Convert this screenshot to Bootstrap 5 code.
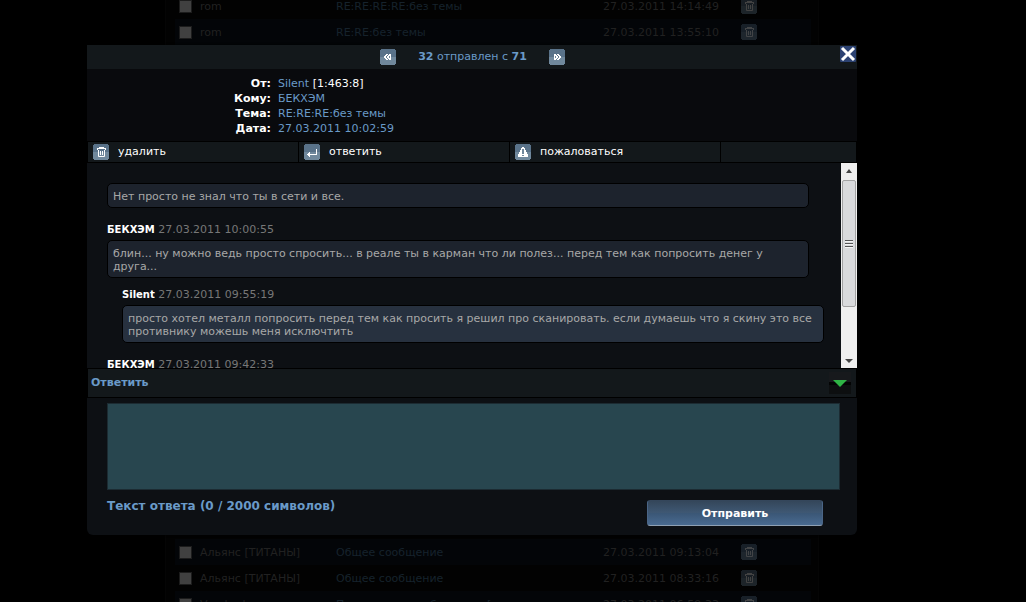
<!DOCTYPE html>
<html lang="ru" data-bs-theme="dark">
<head>
<meta charset="utf-8">
<meta name="viewport" content="width=device-width, initial-scale=1">
<title>Сообщения</title>
<link href="https://cdn.jsdelivr.net/npm/bootstrap@5.3.0/dist/css/bootstrap.min.css" rel="stylesheet">
<style>
  body { background: #000; color: #fff; font-family: Verdana, "DejaVu Sans", sans-serif; font-size: 11px; line-height: 13px; }
  a { color: #6a9ac8; text-decoration: none; }
  .stage { height: 100vh; }
  /* dimmed mailbox behind the dialog */
  .mailbox { margin: 0 207px 0 165px; padding: 0 7px 0 9px; background: #020202; border: 1px solid #050505; border-width: 0 1px; }
  .mail-table { width: 100%; table-layout: fixed; margin-top: -7px; color: #212121; }
  .mail-table tr { height: 26px; background: #020202; }
  .mail-table tr.alt { background: #030508; }
  .mail-table tr.gap-row { height: 494px; }
  .mail-table td { padding: 0; }
  .mail-table a { color: #16222c; }
  .mail-table .form-check-input { width: 13px; height: 13px; margin: 0 0 0 4px; border: 1px solid #1c1c1c; border-radius: 0; background: #404040; display: block; }
  .mail-table .dim { opacity: .25; }
  .icon-btn { width: 16px; height: 16px; padding: 0; border: 0; background: none; line-height: 0; display: block; }
  .icon-btn svg, .tool svg { width: 16px; height: 16px; display: block; }
  /* dialog */
  .letter { top: 45px; left: 87px; right: 169px; background: #0d1014; border-radius: 0 0 6px 6px; box-shadow: 0 0 3px #000; }
  .pager { height: 24px; background: #13181b; color: #6a9ac8; gap: 22px; padding-left: 1px; }
  .lift { padding-bottom: 2px; }
  .close-btn { top: 1px; right: 1px; }
  .facts { background: #090a0d; padding: 7px 0 5px; line-height: 15px; }
  .facts dt { width: 184px; text-align: right; }
  .facts dd { margin-left: 7px; }
  .tools { display: grid; grid-template-columns: 210fr 210fr 210fr 135fr; gap: 1px; background: #000; padding: 1px; height: 22px; }
  .tool { background: #13181b; color: #fff; border: 0; padding: 0 0 0 5px; gap: 9px; font-size: 11px; line-height: 13px; }
  .thread { height: 205px; }
  .posts { padding: 20px 32px 0 20px; }
  .post-head { margin: 15px 0 4px; color: #777; }
  .post-head b { color: #fff; font-size: 10px; }
  .bubble { border: 1px solid #000; border-radius: 5px; padding: 6px 5px 4px; background: #1d232d; color: #a8a8a8; }
  .own { margin: 10px -15px 0 15px; }
  .own .bubble { background: #27313f; }
  .scroller { width: 16px; background: #efefef; }
  .scroller svg { display: block; }
  .thumb { height: 127px; border: 1px solid #a2a2a2; border-radius: 2px; background: #d9dadc; margin: 0 1px; }
  .reply-head { height: 30px; background: #13181b; border: 1px solid #000; color: #6a9ac8; padding: 0 5px 0 3px; }
  .reply { padding: 5px 17px 9px 20px; }
  .reply .form-control { height: 87px; resize: none; border: 1px solid #1c2b32; border-radius: 0; background: #28464f; color: #fff; font-size: 11px; padding: 4px; box-shadow: none; }
  .reply-foot { margin-top: 10px; }
  .reply label { color: #6a9ac8; font-size: 12px; }
  .send { width: 176px; height: 26px; margin-right: 17px; border: 1px solid; border-color: #34465b #4a6586 #8fa0b3; border-radius: 3px; padding: 2px 0 0; background: linear-gradient(#34465a, #3f5874 50%, #3a5675 50%, #496a90); color: #fff; font-size: 11px; font-weight: 700; line-height: 14px; }
</style>
</head>
<body>
<svg width="0" height="0" class="position-absolute" aria-hidden="true" shape-rendering="crispEdges">
  <symbol id="tile" viewBox="0 0 16 16"><path fill="#597289" d="M1 0h14v1h1v7H0V1h1z"/><path fill="#70889c" d="M0 8h16v7h-1v1H1v-1H0z"/></symbol>
  <symbol id="trash" viewBox="0 0 16 16"><use href="#tile"/><path fill="none" stroke="#fff" d="M6 3.500h5M4 4.500h9M4.500 4v2M12.500 4v2M5.500 6v6.500h6V6M7.500 7v4M9.500 7v4"/></symbol>
  <symbol id="enter" viewBox="0 0 16 16"><use href="#tile"/><path fill="none" stroke="#fff" d="M12.500 5v6M3 10.500h10M4.500 9v3M5.500 8v5"/></symbol>
  <symbol id="warn" viewBox="0 0 16 16"><use href="#tile"/><path fill="#fff" d="M7 3h2v1h1v2h1v2h1v2h1v3H3v-3h1V8h1V6h1V4h1z"/><path fill="#70889c" d="M7 5h2v5H7zM7 11h2v1H7z"/></symbol>
  <symbol id="prev" viewBox="0 0 16 16"><use href="#tile"/><path fill="#fff" d="M6 5h2v1H7v1H6v2h1v1h1v1H6v-1H5V9H4V7h1V6h1zM9 5h2v6H9v-1H8V9H7V7h1V6h1z"/><path fill="#70889c" d="M9 7h1v2H9z"/></symbol>
  <symbol id="next" viewBox="0 0 16 16"><use href="#tile"/><path fill="#fff" d="M5 5h2v1h1v1h1v2H8v1H7v1H5zM8 5h2v1h1v1h1v2h-1v1h-1v1H8v-1h1V9h1V7H9V6H8z"/><path fill="#70889c" d="M6 7h1v2H6z"/></symbol>
</svg>

<div class="stage position-relative overflow-hidden">
  <main class="mailbox">
    <table class="mail-table">
      <colgroup><col style="width:25px"><col style="width:136px"><col><col style="width:138px"><col style="width:70px"></colgroup>
      <tbody>
        <tr><td><input class="form-check-input" type="checkbox" aria-label="rom"></td><td>rom</td><td><a href="#">RE:RE:RE:RE:без темы</a></td><td>27.03.2011 14:14:49</td><td><button class="icon-btn dim" aria-label="Удалить"><svg><use href="#trash"/></svg></button></td></tr>
        <tr class="alt"><td><input class="form-check-input" type="checkbox" aria-label="rom"></td><td>rom</td><td><a href="#">RE:RE:без темы</a></td><td>27.03.2011 13:55:10</td><td><button class="icon-btn dim" aria-label="Удалить"><svg><use href="#trash"/></svg></button></td></tr>
        <tr class="gap-row"><td colspan="5"></td></tr>
        <tr class="alt"><td><input class="form-check-input" type="checkbox" aria-label="Альянс"></td><td>Альянс [ТИТАНЫ]</td><td><a href="#">Общее сообщение</a></td><td>27.03.2011 09:13:04</td><td><button class="icon-btn dim" aria-label="Удалить"><svg><use href="#trash"/></svg></button></td></tr>
        <tr><td><input class="form-check-input" type="checkbox" aria-label="Альянс"></td><td>Альянс [ТИТАНЫ]</td><td><a href="#">Общее сообщение</a></td><td>27.03.2011 08:33:16</td><td><button class="icon-btn dim" aria-label="Удалить"><svg><use href="#trash"/></svg></button></td></tr>
        <tr class="alt"><td><input class="form-check-input" type="checkbox" aria-label="Vendred"></td><td>Vendred</td><td><a href="#">Планета переработчиков [</a></td><td>27.03.2011 06:59:33</td><td><button class="icon-btn dim" aria-label="Удалить"><svg><use href="#trash"/></svg></button></td></tr>
      </tbody>
    </table>
  </main>

  <section class="letter position-absolute" role="dialog" aria-label="Сообщение">
    <header class="pager d-flex justify-content-center align-items-center position-relative">
      <button class="icon-btn" aria-label="Предыдущее"><svg><use href="#prev"/></svg></button>
      <span class="lift"><b>32</b> отправлен с <b>71</b></span>
      <button class="icon-btn" aria-label="Следующее"><svg><use href="#next"/></svg></button>
      <button class="icon-btn close-btn position-absolute" aria-label="Закрыть"><svg viewBox="0 0 16 16"><rect width="16" height="16" rx="1" fill="#2c4272"/><path d="M2 2l12 12M14 2L2 14" stroke="#fff" stroke-width="3"/></svg></button>
    </header>
    <dl class="facts mb-0">
      <div class="d-flex"><dt>От:</dt><dd class="mb-0"><a href="#">Silent</a> [1:463:8]</dd></div>
      <div class="d-flex"><dt>Кому:</dt><dd class="mb-0"><a href="#">БЕКХЭМ</a></dd></div>
      <div class="d-flex"><dt>Тема:</dt><dd class="mb-0"><a href="#">RE:RE:RE:без темы</a></dd></div>
      <div class="d-flex"><dt>Дата:</dt><dd class="mb-0"><a href="#">27.03.2011 10:02:59</a></dd></div>
    </dl>
    <div class="tools">
      <button class="tool d-flex align-items-center"><svg><use href="#trash"/></svg><span class="lift">удалить</span></button>
      <button class="tool d-flex align-items-center"><svg><use href="#enter"/></svg><span class="lift">ответить</span></button>
      <button class="tool d-flex align-items-center"><svg><use href="#warn"/></svg><span class="lift">пожаловаться</span></button>
      <span class="tool"></span>
    </div>
    <div class="thread d-flex">
      <div class="posts flex-grow-1 overflow-hidden">
        <article class="bubble">Нет просто не знал что ты в сети и все.</article>
        <article>
          <div class="post-head"><b>БЕКХЭМ</b> 27.03.2011 10:00:55</div>
          <div class="bubble">блин... ну можно ведь просто спросить... в реале ты в карман что ли полез... перед тем как попросить денег у друга...</div>
        </article>
        <article class="own">
          <div class="post-head mt-0"><b>Silent</b> 27.03.2011 09:55:19</div>
          <div class="bubble">просто хотел металл попросить перед тем как просить я решил про сканировать. если думаешь что я скину это все противнику можешь меня исключтить</div>
        </article>
        <article>
          <div class="post-head"><b>БЕКХЭМ</b> 27.03.2011 09:42:33</div>
        </article>
      </div>
      <div class="scroller d-flex flex-column flex-shrink-0" aria-hidden="true">
        <svg width="16" height="17"><path d="M5 10l3-4 3 4z" fill="#444"/></svg>
        <div class="thumb d-flex justify-content-center align-items-center"><svg width="8" height="9" shape-rendering="crispEdges"><path d="M0 1.500h8M0 4.500h8M0 7.500h8" stroke="#555"/><path d="M0 2.500h8M0 5.500h8M0 8.500h8" stroke="#f5f5f5"/></svg></div>
        <svg class="mt-auto" width="16" height="16"><path d="M4 7h8l-4 4z" fill="#444"/></svg>
      </div>
    </div>
    <div class="reply-head d-flex justify-content-between align-items-center">
      <b class="lift">Ответить</b>
      <button class="icon-btn w-auto h-auto" aria-label="Свернуть"><svg style="width:22px;height:22px" viewBox="0 0 22 22"><path fill="#17191c" d="M0 0h22v10H0z"/><path fill="#030404" d="M0 10h22v3H0z"/><path fill="#0d0f10" d="M0 13h22v9H0z"/><path fill="#2fb445" d="M4 8h14l-7 7z"/></svg></button>
    </div>
    <form class="reply">
      <textarea class="form-control" id="answer"></textarea>
      <div class="reply-foot d-flex justify-content-between">
        <label for="answer"><b>Текст ответа (0 / 2000 символов)</b></label>
        <button type="button" class="send">Отправить</button>
      </div>
    </form>
  </section>
</div>
<script src="https://cdn.jsdelivr.net/npm/bootstrap@5.3.0/dist/js/bootstrap.bundle.min.js"></script>
</body>
</html>
